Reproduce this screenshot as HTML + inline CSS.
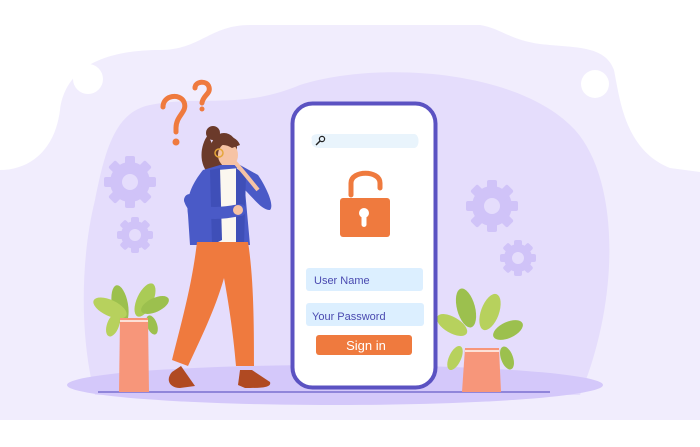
<!DOCTYPE html>
<html><head><meta charset="utf-8"><style>
html,body{margin:0;padding:0;background:#fff;width:700px;height:447px;overflow:hidden}
svg{display:block}
text{font-family:"Liberation Sans",sans-serif}
</style></head><body>
<svg width="700" height="447" viewBox="0 0 700 447" xmlns="http://www.w3.org/2000/svg">
<rect width="700" height="447" fill="#fff"/>
<path d="M0 170 C30 170 55 150 60 110 C65 70 100 50 160 50 C200 50 210 25 250 25 L700 25 L700 420 L0 420 Z" fill="#f1edfd"/>
<path d="M480 25 C500 28 510 40 540 44 C575 48 605 45 614 70 C620 100 625 150 670 168 L700 172 L700 25 Z" fill="#fff"/>
<circle cx="88" cy="79" r="15" fill="#fff"/>
<circle cx="595" cy="84" r="14" fill="#fff"/>
<path d="M150 105 C200 95 240 110 300 85 C380 60 520 70 575 130 C620 180 620 300 580 395 L95 395 C80 340 80 260 95 200 C105 150 115 112 150 105 Z" fill="#e5ddfc"/>
<ellipse cx="335" cy="385" rx="268" ry="20" fill="#d4c8fa"/>
<line x1="98" y1="392" x2="550" y2="392" stroke="#7a6fd0" stroke-width="1.5"/>
<g fill="#d0c3f8">
 <g transform="translate(130,182)"><circle r="20"/><rect x="-5" y="-26" width="10" height="52" rx="2"/><rect x="-5" y="-26" width="10" height="52" rx="2" transform="rotate(45)"/><rect x="-5" y="-26" width="10" height="52" rx="2" transform="rotate(90)"/><rect x="-5" y="-26" width="10" height="52" rx="2" transform="rotate(135)"/><circle r="8" fill="#e5ddfc"/></g>
 <g transform="translate(135,235)"><circle r="14"/><rect x="-4" y="-18" width="8" height="36" rx="2"/><rect x="-4" y="-18" width="8" height="36" rx="2" transform="rotate(45)"/><rect x="-4" y="-18" width="8" height="36" rx="2" transform="rotate(90)"/><rect x="-4" y="-18" width="8" height="36" rx="2" transform="rotate(135)"/><circle r="6" fill="#e5ddfc"/></g>
 <g transform="translate(492,206)"><circle r="20"/><rect x="-5" y="-26" width="10" height="52" rx="2"/><rect x="-5" y="-26" width="10" height="52" rx="2" transform="rotate(45)"/><rect x="-5" y="-26" width="10" height="52" rx="2" transform="rotate(90)"/><rect x="-5" y="-26" width="10" height="52" rx="2" transform="rotate(135)"/><circle r="8" fill="#e5ddfc"/></g>
 <g transform="translate(518,258)"><circle r="14"/><rect x="-4" y="-18" width="8" height="36" rx="2"/><rect x="-4" y="-18" width="8" height="36" rx="2" transform="rotate(45)"/><rect x="-4" y="-18" width="8" height="36" rx="2" transform="rotate(90)"/><rect x="-4" y="-18" width="8" height="36" rx="2" transform="rotate(135)"/><circle r="6" fill="#e5ddfc"/></g>
</g>
<g fill="none" stroke="#ef7a3e" stroke-width="5" stroke-linecap="round">
 <path d="M163 107 C163 95 180 93 184 102 C188 112 176 115 176 128 L176 132"/>
 <path d="M195 88 C195 81 207 80 209 87 C211 94 203 95 202 103"/>
</g>
<circle cx="176" cy="142" r="3.5" fill="#ef7a3e"/><circle cx="202" cy="109" r="2.5" fill="#ef7a3e"/>
<g>
 <ellipse cx="120" cy="305" rx="8" ry="20" fill="#9cc04e" transform="rotate(-10 120 305)"/>
 <ellipse cx="145" cy="300" rx="8" ry="18" fill="#aacb56" transform="rotate(25 145 300)"/>
 <ellipse cx="110" cy="308" rx="18" ry="8" fill="#b7d15d" transform="rotate(25 110 308)"/>
 <ellipse cx="155" cy="305" rx="15" ry="7" fill="#9cc04e" transform="rotate(-25 155 305)"/>
 <ellipse cx="113" cy="325" rx="6" ry="12" fill="#b7d15d" transform="rotate(20 113 325)"/>
 <ellipse cx="152" cy="325" rx="5" ry="10" fill="#9cc04e" transform="rotate(-20 152 325)"/>
 <path d="M120 318 L148 318 L149 392 L119 392 Z" fill="#f7967a"/>
 <rect x="120" y="320" width="28" height="2" fill="#fff" opacity=".7"/>
</g>
<g>
 <ellipse cx="466" cy="308" rx="9" ry="20" fill="#9cc04e" transform="rotate(-15 466 308)"/>
 <ellipse cx="490" cy="312" rx="9" ry="19" fill="#b7d15d" transform="rotate(20 490 312)"/>
 <ellipse cx="452" cy="325" rx="17" ry="8" fill="#b7d15d" transform="rotate(30 452 325)"/>
 <ellipse cx="508" cy="330" rx="16" ry="8" fill="#9cc04e" transform="rotate(-25 508 330)"/>
 <ellipse cx="455" cy="358" rx="6" ry="13" fill="#b7d15d" transform="rotate(25 455 358)"/>
 <ellipse cx="507" cy="358" rx="6" ry="12" fill="#9cc04e" transform="rotate(-20 507 358)"/>
 <path d="M465 348 L499 348 L501 392 L462 392 Z" fill="#f7967a"/>
 <rect x="465" y="350" width="34" height="2" fill="#fff" opacity=".7"/>
</g>
<g>
 <path d="M208 135 C200 145 198 165 210 175 L222 165 Z" fill="#6b3a2a"/>
 <circle cx="213" cy="133" r="7" fill="#6b3a2a"/>
 <ellipse cx="224" cy="148" rx="13" ry="15" fill="#6b3a2a"/>
 <ellipse cx="228" cy="155" rx="10" ry="12" fill="#f6c3a4"/>
 <path d="M215 140 C220 134 236 134 240 145 L232 148 C226 144 220 144 215 148 Z" fill="#6b3a2a"/>
 <circle cx="219" cy="153" r="4" fill="none" stroke="#e5a63a" stroke-width="1.5"/>
 <path d="M203 170 C195 180 185 195 188 215 L190 245 L250 245 L245 190 C255 200 262 210 270 210 C275 205 265 185 258 175 L240 165 L220 165 Z" fill="#4a5ac7"/>
 <path d="M218 170 L240 168 L238 242 L216 242 Z" fill="#fbf7ef"/>
 <path d="M210 170 L220 168 L222 240 L212 245 Z" fill="#3f4fb8"/>
 <path d="M236 168 L246 175 L244 245 L236 245 Z" fill="#3f4fb8"/>
 <path d="M233 160 C240 168 250 180 258 190" stroke="#f6c3a4" stroke-width="4" fill="none"/>
 <path d="M190 200 C195 215 215 215 240 210" stroke="#4a5ac7" stroke-width="12" fill="none" stroke-linecap="round"/>
 <circle cx="238" cy="210" r="5" fill="#f6c3a4"/>
 <path d="M197 242 L248 242 C254 280 254 330 254 366 L236 366 C233 330 228 300 224 278 C215 310 200 340 188 366 L172 360 C182 320 192 285 197 242 Z" fill="#ef7a3e"/>
 <path d="M181 366 L172 372 C165 380 170 388 180 388 L195 386 Z" fill="#b04a22"/>
 <path d="M240 370 L252 370 L270 382 C272 388 260 388 245 388 L238 385 Z" fill="#b04a22"/>
</g>
<rect x="292.5" y="103.5" width="143" height="284" rx="20" fill="#fff" stroke="#5b52c2" stroke-width="4"/>
<path d="M312 140 C310 135 315 134 320 134 L414 134 C420 134 420 148 414 148 L320 148 C315 148 310 146 312 140 Z" fill="#e9f4fc"/>
<circle cx="322" cy="139" r="2.6" fill="none" stroke="#222" stroke-width="1.2"/>
<line x1="320" y1="141" x2="316" y2="145" stroke="#222" stroke-width="1.4"/>
<path d="M351 195 L351 183 C351 170 380 170 380 183 L380 188" fill="none" stroke="#ef7a3e" stroke-width="5" stroke-linecap="round"/>
<rect x="340" y="198" width="50" height="39" rx="3" fill="#ef7a3e"/>
<circle cx="364" cy="213" r="5" fill="#fff"/><rect x="361.5" y="213" width="5" height="14" rx="2.5" fill="#fff"/>
<rect x="306" y="268" width="117" height="23" rx="3" fill="#dcefff"/>
<text x="314" y="284" font-size="11" fill="#4a4ab0">User Name</text>
<rect x="306" y="303" width="118" height="23" rx="3" fill="#dcefff"/>
<text x="312" y="320" font-size="11" fill="#4a4ab0">Your Password</text>
<rect x="316" y="335" width="96" height="20" rx="3" fill="#ef7a3e"/>
<text x="366" y="350" font-size="13" fill="#fff" text-anchor="middle">Sign in</text>
</svg>
</body></html>
